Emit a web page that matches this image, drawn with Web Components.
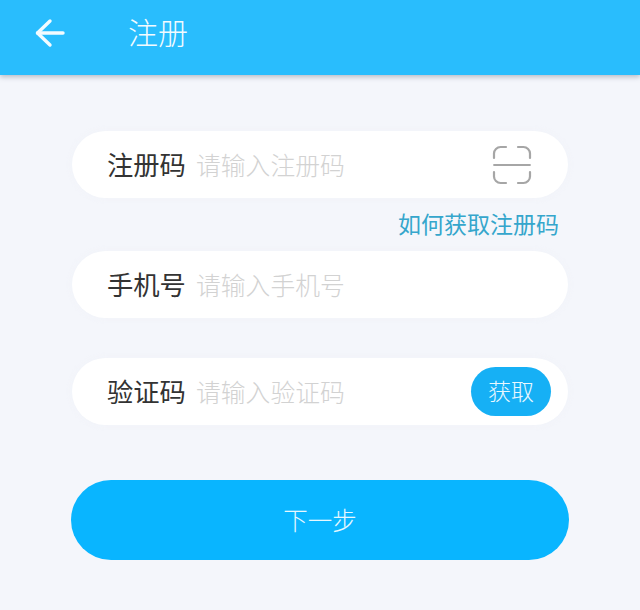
<!DOCTYPE html>
<html lang="zh">
<head>
<meta charset="utf-8">
<title>注册</title>
<style>
html, body { margin: 0; height: 100%; }
body {
  background: #f4f6fb;
  font-family: "Noto Sans CJK SC", "Noto Sans", sans-serif;
}
</style>
</head>
<body>
<app-bar>注册</app-bar>
<form-view>
  <field-row class="scan" label="注册码" placeholder="请输入注册码">
    <svg slot="end" width="40" height="40" viewBox="0 0 40 40" fill="none" stroke="#a6a6a6" stroke-width="2.200" stroke-linecap="round">
      <path d="M14 2H8.500C5 2 2 5 2 8.500V13"/>
      <path d="M26 2H31.500C35 2 38 5 38 8.500V13"/>
      <path d="M2 20H38" stroke-width="1.800"/>
      <path d="M2 27V31.500C2 35 5 38 8.500 38H14"/>
      <path d="M38 27V31.500C38 35 35 38 31.500 38H26"/>
    </svg>
  </field-row>
  <help-link>如何获取注册码</help-link>
  <field-row label="手机号" placeholder="请输入手机号"></field-row>
  <field-row class="code" label="验证码" placeholder="请输入验证码">
    <pill-button slot="end">获取</pill-button>
  </field-row>
  <next-button>下一步</next-button>
</form-view>
<script>
"use strict";

class AppBar extends HTMLElement {
  constructor() {
    super();
    this.attachShadow({ mode: 'open' });
    this.shadowRoot.innerHTML = `
<style>
:host {
  display: flex;
  align-items: center;
  height: 75px;
  padding-left: 35px;
  box-sizing: border-box;
  background: #29bdfd;
  color: #f2fbff;
  box-shadow: 0 2px 5px rgba(90, 100, 120, 0.4);
  position: relative;
}
svg { display: block; margin-top: -9px; }
#title {
  margin-left: 63px;
  font-size: 30px;
  font-weight: 300;
  line-height: 36px;
  margin-top: -13px;
}
</style>
<svg width="30" height="30" viewBox="0 0 30 30" fill="none" stroke="#f2fbff" stroke-width="3.400" stroke-linecap="round" stroke-linejoin="round">
  <path d="M2.500 15H28"/>
  <path d="M15 3L2.500 15L15 27"/>
</svg>
<div id="title"><slot></slot></div>
`;
  }
}
customElements.define('app-bar', AppBar);

class FormView extends HTMLElement {
  constructor() {
    super();
    this.attachShadow({ mode: 'open' });
    this.shadowRoot.innerHTML = `
<style>
:host {
  display: flex;
  flex-direction: column;
  padding: 56px 72px 0 72px;
}
</style>
<slot></slot>
`;
  }
}
customElements.define('form-view', FormView);

class FieldRow extends HTMLElement {
  constructor() {
    super();
    this.attachShadow({ mode: 'open' });
    this.shadowRoot.innerHTML = `
<style>
:host {
  display: flex;
  align-items: center;
  height: 67px;
  padding: 0 17px 0 35px;
  box-sizing: border-box;
  background: #fff;
  border-radius: 34px;
  box-shadow: 0 0 7px rgba(240, 243, 249, 0.8);
}
:host(.scan) { padding-right: 36px; }
:host(.code) { margin-top: 40px; }
#label {
  width: 89px;
  flex: none;
  padding-bottom: 2px;
  font-size: 26.300px;
  line-height: 34px;
  color: #333;
  white-space: nowrap;
}
#hint {
  flex: 1;
  padding-bottom: 2px;
  font-size: 24.800px;
  font-weight: 300;
  line-height: 34px;
  color: #d2d2d2;
  white-space: nowrap;
}
</style>
<div id="label"></div>
<div id="hint"></div>
<slot name="end"></slot>
`;
  }

  connectedCallback() {
    this.shadowRoot.getElementById("label").textContent = this.getAttribute("label");
    this.shadowRoot.getElementById("hint").textContent = this.getAttribute("placeholder");
  }
}
customElements.define('field-row', FieldRow);

class HelpLink extends HTMLElement {
  constructor() {
    super();
    this.attachShadow({ mode: 'open' });
    this.shadowRoot.innerHTML = `
<style>
:host {
  display: block;
  height: 53px;
  padding-right: 9px;
  font-size: 23px;
  line-height: 51px;
  text-align: right;
  color: #35a6cc;
}
</style>
<slot></slot>
`;
  }
}
customElements.define('help-link', HelpLink);

class PillButton extends HTMLElement {
  constructor() {
    super();
    this.attachShadow({ mode: 'open' });
    this.shadowRoot.innerHTML = `
<style>
:host {
  display: flex;
  align-items: center;
  justify-content: center;
  width: 80px;
  height: 49px;
  padding-bottom: 3px;
  box-sizing: border-box;
  border-radius: 25px;
  background: #16b0f5;
  color: #e9f8ff;
  font-size: 23px;
  font-weight: 300;
}
</style>
<slot></slot>
`;
  }
}
customElements.define('pill-button', PillButton);

class NextButton extends HTMLElement {
  constructor() {
    super();
    this.attachShadow({ mode: 'open' });
    this.shadowRoot.innerHTML = `
<style>
:host {
  display: flex;
  align-items: center;
  justify-content: center;
  height: 80px;
  padding-bottom: 2px;
  box-sizing: border-box;
  margin: 55px -1px 0 -1px;
  border-radius: 40px;
  background: #09b5ff;
  color: #e6f8ff;
  font-size: 24.500px;
  font-weight: 300;
}
</style>
<slot></slot>
`;
  }
}
customElements.define('next-button', NextButton);
</script>
</body>
</html>
